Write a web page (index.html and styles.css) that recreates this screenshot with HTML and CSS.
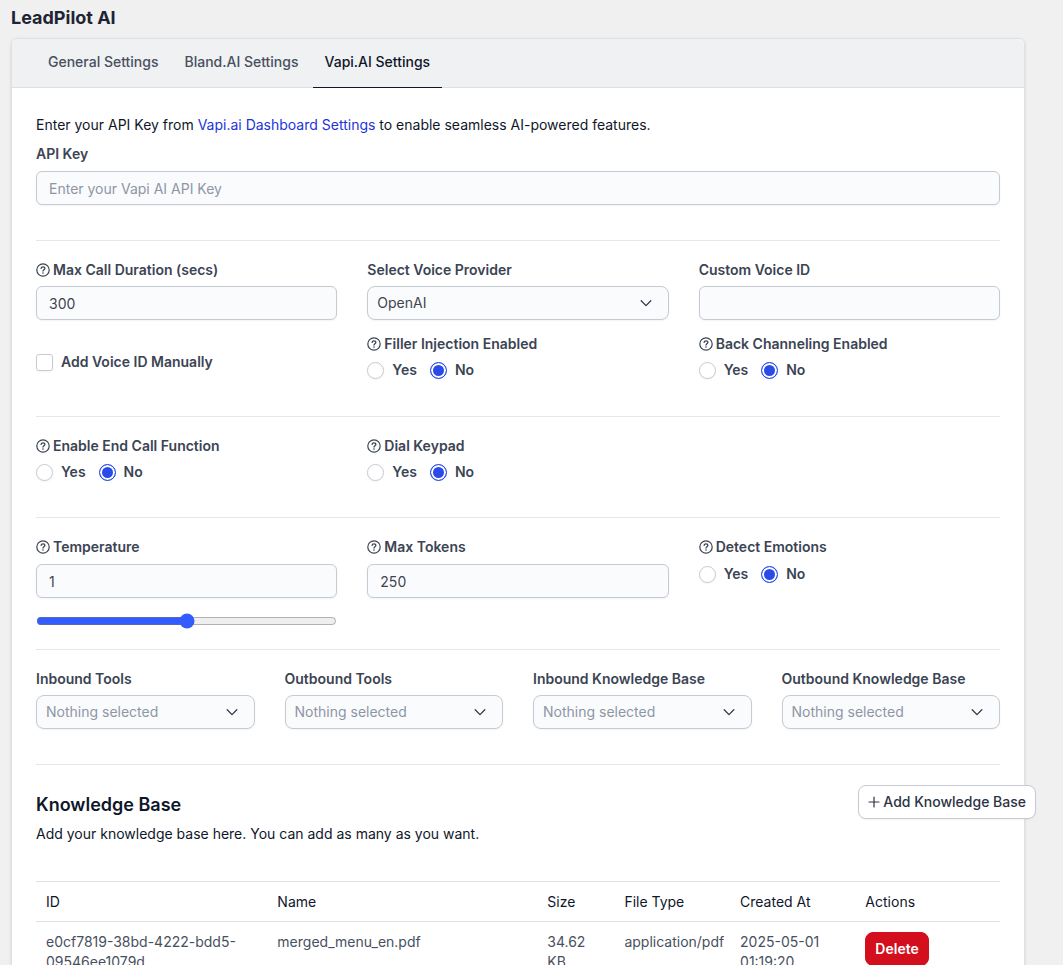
FILE: index.html
```html
<!DOCTYPE html>
<html lang="en">
<head>
  <meta charset="UTF-8" />
  <meta name="viewport" content="width=device-width, initial-scale=1.0"/>
  <title>LeadPilot AI</title>
  <link rel="stylesheet" href="styles.css">
</head>
<body>
  <!-- Shared icons -->
  <svg class="sprite" aria-hidden="true">
    <symbol id="icon-help" viewBox="0 0 14 14">
      <circle cx="7" cy="7" r="6.2" fill="none" stroke="currentColor" stroke-width="1.2"/>
      <path d="M5.1 5.4c.1-1 .8-1.6 1.9-1.6s1.9.6 1.9 1.5c0 1.3-1.9 1.4-1.9 2.7" fill="none" stroke="currentColor" stroke-width="1.3" stroke-linecap="round"/>
      <circle cx="7" cy="10" r=".8" fill="currentColor"/>
    </symbol>
    <symbol id="icon-down" viewBox="0 0 12 12">
      <path d="M1.2 3.8 6 8.6l4.8-4.8" fill="none" stroke="currentColor" stroke-width="1.3" stroke-linecap="round" stroke-linejoin="round"/>
    </symbol>
  </svg>

  <main class="content">
    <h1>LeadPilot AI</h1>

    <div class="panel">
      <nav class="tabs">
        <a href="#general">General Settings</a>
        <a href="#bland">Bland.AI Settings</a>
        <a href="#vapi" class="active">Vapi.AI Settings</a>
      </nav>

      <div class="panel-body">
        <form>
          <section class="api">
            <p>Enter your API Key from <a href="#dashboard">Vapi.ai Dashboard Settings</a> to enable seamless AI-powered features.</p>
            <label class="label" for="api_key">API Key</label>
            <input class="control" type="text" id="api_key" placeholder="Enter your Vapi AI API Key">
          </section>

          <section class="section section-voice">
            <div class="cols-3">
              <div class="field">
                <label class="label" for="duration"><svg class="help"><use href="#icon-help"/></svg>Max Call Duration (secs)</label>
                <input class="control" type="text" id="duration" value="300">
              </div>
              <div class="field">
                <label class="label" for="provider">Select Voice Provider</label>
                <div class="select">
                  <select class="control" id="provider"><option>OpenAI</option></select>
                  <svg class="down"><use href="#icon-down"/></svg>
                </div>
              </div>
              <div class="field">
                <label class="label" for="voice_id">Custom Voice ID</label>
                <input class="control" type="text" id="voice_id">
              </div>
            </div>
            <div class="cols-3">
              <label class="choice manual"><input type="checkbox">Add Voice ID Manually</label>
              <fieldset class="field">
                <legend class="label"><svg class="help"><use href="#icon-help"/></svg>Filler Injection Enabled</legend>
                <div class="choices">
                  <label class="choice"><input type="radio" name="filler">Yes</label>
                  <label class="choice"><input type="radio" name="filler" checked>No</label>
                </div>
              </fieldset>
              <fieldset class="field">
                <legend class="label"><svg class="help"><use href="#icon-help"/></svg>Back Channeling Enabled</legend>
                <div class="choices">
                  <label class="choice"><input type="radio" name="back">Yes</label>
                  <label class="choice"><input type="radio" name="back" checked>No</label>
                </div>
              </fieldset>
            </div>
          </section>

          <section class="section">
            <div class="cols-3">
              <fieldset class="field">
                <legend class="label"><svg class="help"><use href="#icon-help"/></svg>Enable End Call Function</legend>
                <div class="choices">
                  <label class="choice"><input type="radio" name="endcall">Yes</label>
                  <label class="choice"><input type="radio" name="endcall" checked>No</label>
                </div>
              </fieldset>
              <fieldset class="field">
                <legend class="label"><svg class="help"><use href="#icon-help"/></svg>Dial Keypad</legend>
                <div class="choices">
                  <label class="choice"><input type="radio" name="keypad">Yes</label>
                  <label class="choice"><input type="radio" name="keypad" checked>No</label>
                </div>
              </fieldset>
            </div>
          </section>

          <section class="section section-model">
            <div class="cols-3">
              <div class="field">
                <label class="label" for="temperature"><svg class="help"><use href="#icon-help"/></svg>Temperature</label>
                <input class="control" type="text" id="temperature" value="1">
                <input class="slider" type="range" min="0" max="2" step="0.1" value="1" aria-label="Temperature">
              </div>
              <div class="field">
                <label class="label" for="tokens"><svg class="help"><use href="#icon-help"/></svg>Max Tokens</label>
                <input class="control" type="text" id="tokens" value="250">
              </div>
              <fieldset class="field">
                <legend class="label"><svg class="help"><use href="#icon-help"/></svg>Detect Emotions</legend>
                <div class="choices">
                  <label class="choice"><input type="radio" name="emotions">Yes</label>
                  <label class="choice"><input type="radio" name="emotions" checked>No</label>
                </div>
              </fieldset>
            </div>
          </section>

          <section class="section">
            <div class="cols-4">
              <div class="field">
                <label class="label" for="in_tools">Inbound Tools</label>
                <div class="select">
                  <select class="control empty" id="in_tools"><option>Nothing selected</option></select>
                  <svg class="down"><use href="#icon-down"/></svg>
                </div>
              </div>
              <div class="field">
                <label class="label" for="out_tools">Outbound Tools</label>
                <div class="select">
                  <select class="control empty" id="out_tools"><option>Nothing selected</option></select>
                  <svg class="down"><use href="#icon-down"/></svg>
                </div>
              </div>
              <div class="field">
                <label class="label" for="in_kb">Inbound Knowledge Base</label>
                <div class="select">
                  <select class="control empty" id="in_kb"><option>Nothing selected</option></select>
                  <svg class="down"><use href="#icon-down"/></svg>
                </div>
              </div>
              <div class="field">
                <label class="label" for="out_kb">Outbound Knowledge Base</label>
                <div class="select">
                  <select class="control empty" id="out_kb"><option>Nothing selected</option></select>
                  <svg class="down"><use href="#icon-down"/></svg>
                </div>
              </div>
            </div>
          </section>
        </form>

        <section class="section">
          <div class="kb-head">
            <div>
              <h2>Knowledge Base</h2>
              <p>Add your knowledge base here. You can add as many as you want.</p>
            </div>
            <button type="button" class="btn btn-default">
              <svg class="plus" viewBox="0 0 12 12"><path d="M6 1v10M1 6h10" stroke="currentColor" stroke-width="1.2" stroke-linecap="round"/></svg>Add Knowledge Base
            </button>
          </div>

          <table>
            <thead>
              <tr>
                <th class="col-id">ID</th>
                <th class="col-name">Name</th>
                <th class="col-size">Size</th>
                <th class="col-type">File Type</th>
                <th class="col-date">Created At</th>
                <th>Actions</th>
              </tr>
            </thead>
            <tbody>
              <tr>
                <td>e0cf7819-38bd-4222-bdd5-09546ee1079d</td>
                <td>merged_menu_en.pdf</td>
                <td>34.62 KB</td>
                <td class="file-type">application/pdf</td>
                <td>2025-05-01 01:19:20</td>
                <td><button type="button" class="btn btn-danger">Delete</button></td>
              </tr>
            </tbody>
          </table>
        </section>
      </div>
    </div>
  </main>
</body>
</html>
```
FILE: styles.css
```css
* {
  box-sizing: border-box;
}

body {
  margin: 0;
  font-family: Inter, sans-serif;
  font-size: 14px;
  line-height: 20px;
  color: #0f172a;
  background: #f0f0f0;
}

.sprite {
  display: none;
}

.content {
  padding: 5px 38px 24px 11px;
}

h1 {
  margin: 0 0 7px;
  font-size: 18px;
  line-height: 26px;
  font-weight: 700;
  color: #1e2433;
}

.panel {
  background: #fff;
  border: 1px solid #dfe1e5;
  border-radius: 6px;
  box-shadow: 0 1px 3px rgba(0, 0, 0, 0.12);
}

.tabs {
  display: flex;
  gap: 2px;
  padding: 0 24px;
  background: #f0f1f3;
  border-bottom: 1px solid #dcdee2;
  border-radius: 6px 6px 0 0;
}

.tabs a {
  padding: 13px 12px 15px;
  margin-bottom: -1px;
  border-bottom: 1px solid transparent;
  font-weight: 500;
  color: #475060;
  text-decoration: none;
}

.tabs .active {
  color: #0f172a;
  border-color: #0f172a;
}

.panel-body {
  padding: 27px 24px 24px;
}

p {
  margin: 0;
}

p a {
  color: #1d34d8;
  text-decoration: none;
}

.api {
  padding-bottom: 35px;
}

.api .label {
  margin: 9px 0 7px;
}

.section {
  padding: 19px 0 35px;
  border-top: 1px solid #e5e7e9;
}

.section-voice {
  display: grid;
  gap: 14px;
  padding-bottom: 36px;
}

.section-model {
  padding-bottom: 20px;
}

.cols-3,
.cols-4 {
  display: grid;
  grid-template-columns: repeat(3, 1fr);
  align-items: start;
  gap: 30px;
}

.cols-4 {
  grid-template-columns: repeat(4, 1fr);
}

.field {
  min-width: 0;
  margin: 0;
  padding: 0;
  border: 0;
}

.label {
  display: flex;
  align-items: center;
  gap: 3px;
  padding: 0;
  margin-bottom: 6px;
  font-weight: 600;
  color: #3b4453;
}

.section-model .label {
  margin-bottom: 7px;
}

.help {
  width: 14px;
  height: 14px;
}

.control {
  display: block;
  width: 100%;
  height: 34px;
  padding: 0 12px;
  font: inherit;
  color: #3f4550;
  background: #fafbfd;
  border: 1px solid #c6cad2;
  border-radius: 6px;
  box-shadow: 0 1px 2px rgba(0, 0, 0, 0.05);
}

.control::placeholder {
  color: #8e96a5;
}

.select {
  position: relative;
}

.select .control {
  padding: 0 36px 0 9px;
  border-radius: 8px;
  appearance: none;
}

.select .empty {
  color: #8e96a5;
}

/* chevron lies over the select box */
.down {
  position: absolute;
  top: 11px;
  right: 17px;
  width: 12px;
  height: 12px;
  color: #333b48;
  pointer-events: none;
}

.choices {
  display: flex;
  gap: 13px;
}

.choice {
  display: flex;
  align-items: center;
  gap: 8px;
  font-weight: 600;
  color: #3b4453;
}

.manual {
  padding-top: 18px;
}

.choice input {
  appearance: none;
  width: 17px;
  height: 17px;
  margin: 0;
  background: #fff;
  border: 1px solid #c6cad2;
  border-radius: 3px;
  box-shadow: 0 1px 2px rgba(0, 0, 0, 0.05);
}

.choice input[type="radio"] {
  border-radius: 50%;
}

.choice input:checked {
  border-color: #2b4be8;
  background: #2b4be8;
  box-shadow: inset 0 0 0 2px #fff;
}

.slider {
  display: block;
  width: 100%;
  height: 16px;
  margin: 15px 0 0;
  accent-color: #335cff;
}

.kb-head {
  display: flex;
  align-items: flex-start;
  justify-content: space-between;
  padding-top: 1px;
}

h2 {
  margin: 7px 0 6px;
  font-size: 18px;
  line-height: 26px;
  font-weight: 600;
}

.btn {
  display: flex;
  align-items: center;
  gap: 3px;
  height: 34px;
  padding: 0 9px;
  font: inherit;
  font-weight: 500;
  border: 1px solid #c6cad2;
  border-radius: 8px;
  cursor: pointer;
}

.btn-default {
  margin-right: -36px;
  color: #2c3444;
  background: #fff;
  box-shadow: 0 1px 2px rgba(0, 0, 0, 0.05);
}

.plus {
  width: 12px;
  height: 12px;
}

.btn-danger {
  font-weight: 600;
  color: #fff;
  background: #d30f1e;
  border-color: #d30f1e;
}

table {
  width: 100%;
  margin-top: 37px;
  table-layout: fixed;
  border-collapse: collapse;
}

th,
td {
  padding: 10px 10px 9px;
  text-align: left;
  vertical-align: top;
  border-top: 1px solid #dfe1e3;
}

th {
  font-weight: 400;
}

td {
  color: #475060;
}

.file-type {
  white-space: nowrap;
}

.col-id {
  width: 24%;
}

.col-name {
  width: 28%;
}

.col-size {
  width: 8%;
}

.col-type {
  width: 12%;
}

.col-date {
  width: 13%;
}
```
